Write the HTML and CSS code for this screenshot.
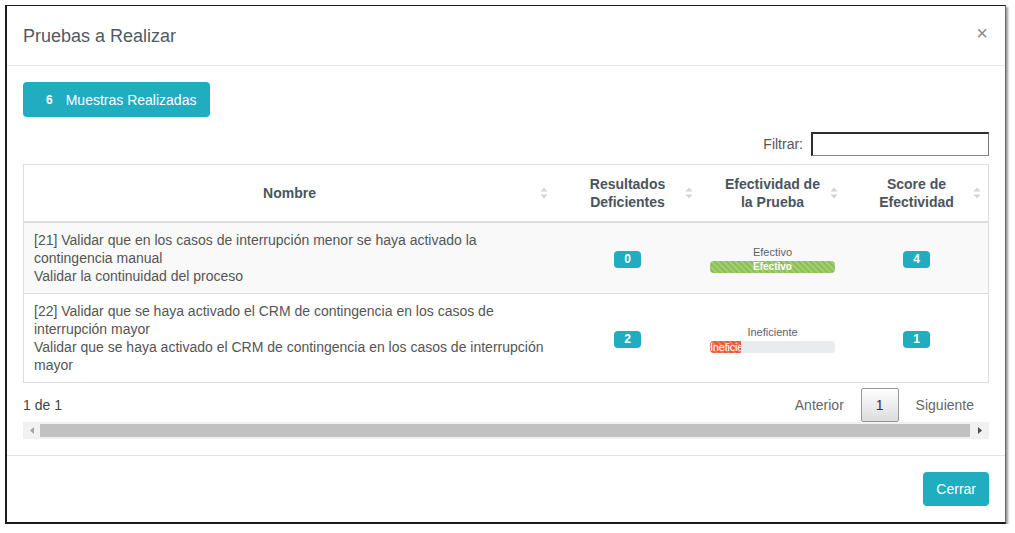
FILE: index.html
```html
<!DOCTYPE html>
<html lang="es">
<head>
<meta charset="utf-8">
<title>Pruebas a Realizar</title>
<link rel="stylesheet" href="styles.css">
</head>
<body>
<div class="modal">
  <div class="modal-header">
    <h4 class="modal-title">Pruebas a Realizar</h4>
    <span class="close">×</span>
  </div>
  <div class="modal-body">
    <div class="btn-row">
      <button class="btn btn-info btn-muestras"><span class="count">6</span>Muestras Realizadas</button>
    </div>
    <div class="filter-row">
      <label class="filter-label">Filtrar:</label>
      <input class="filter-input" type="text">
    </div>
    <table class="dt">
      <colgroup>
        <col class="c1"><col class="c2"><col class="c3"><col class="c4">
      </colgroup>
      <thead>
        <tr>
          <th>Nombre<svg class="sort" width="8" height="14" viewBox="0 0 8 14"><path d="M4 1.5 L7.5 5.5 H0.5 Z" fill="#d4d4d4"/><path d="M4 12.5 L7.5 8.5 H0.5 Z" fill="#d4d4d4"/></svg></th>
          <th>Resultados Deficientes<svg class="sort" width="8" height="14" viewBox="0 0 8 14"><path d="M4 1.5 L7.5 5.5 H0.5 Z" fill="#d4d4d4"/><path d="M4 12.5 L7.5 8.5 H0.5 Z" fill="#d4d4d4"/></svg></th>
          <th>Efectividad de la Prueba<svg class="sort" width="8" height="14" viewBox="0 0 8 14"><path d="M4 1.5 L7.5 5.5 H0.5 Z" fill="#d4d4d4"/><path d="M4 12.5 L7.5 8.5 H0.5 Z" fill="#d4d4d4"/></svg></th>
          <th>Score de Efectividad<svg class="sort" width="8" height="14" viewBox="0 0 8 14"><path d="M4 1.5 L7.5 5.5 H0.5 Z" fill="#d4d4d4"/><path d="M4 12.5 L7.5 8.5 H0.5 Z" fill="#d4d4d4"/></svg></th>
        </tr>
      </thead>
      <tbody>
        <tr class="odd">
          <td class="name">[21] Validar que en los casos de interrupción menor se haya activado la contingencia manual<br>Validar la continuidad del proceso</td>
          <td class="center"><span class="badge">0</span></td>
          <td class="center">
            <div class="prog-wrap">
              <div class="prog-label">Efectivo</div>
              <div class="progress"><div class="bar bar-success" style="width:100%">Efectivo</div></div>
            </div>
          </td>
          <td class="center"><span class="badge">4</span></td>
        </tr>
        <tr>
          <td class="name">[22] Validar que se haya activado el CRM de contingencia en los casos de interrupción mayor<br>Validar que se haya activado el CRM de contingencia en los casos de interrupción mayor</td>
          <td class="center"><span class="badge">2</span></td>
          <td class="center">
            <div class="prog-wrap">
              <div class="prog-label">Ineficiente</div>
              <div class="progress"><div class="bar bar-danger" style="width:25%">Ineficiente</div></div>
            </div>
          </td>
          <td class="center"><span class="badge">1</span></td>
        </tr>
      </tbody>
    </table>
    <div class="info-row">
      <div class="info">1 de 1</div>
      <div class="paginate">
        <span class="pg-btn disabled">Anterior</span>
        <span class="pg-btn current">1</span>
        <span class="pg-btn disabled">Siguiente</span>
      </div>
    </div>
    <div class="hscroll">
      <div class="arrow arrow-left"><svg width="4" height="7" viewBox="0 0 4 7"><path d="M4 0 V7 L0 3.5 Z" fill="#a3a3a3"/></svg></div>
      <div class="thumb"></div>
      <div class="arrow arrow-right"><svg width="4" height="7" viewBox="0 0 4 7"><path d="M0 0 V7 L4 3.5 Z" fill="#505050"/></svg></div>
    </div>
  </div>
  <div class="modal-footer">
    <button class="btn btn-info btn-cerrar">Cerrar</button>
  </div>
</div>
</body>
</html>
```

FILE: styles.css
```css
* { box-sizing: border-box; }
html, body { margin: 0; padding: 0; background: #fff; }
body {
  font-family: "Liberation Sans", Arial, sans-serif;
  font-size: 14px;
  line-height: 18px;
  color: #555;
  padding: 5px 0 0 5px;
}
.modal {
  width: 1001px;
  background: #fff;
  border-top: 1px solid #1c1c1c;
  border-left: 2px solid #1c1c1c;
  border-bottom: 2px solid #1c1c1c;
  border-right: 1px solid #6a6a6a;
  box-shadow: 2px 2px 2px rgba(0,0,0,0.4);
}
.modal-header {
  height: 60px;
  padding: 0 16px;
  border-bottom: 1px solid #e5e5e5;
  display: flex;
  align-items: center;
  justify-content: space-between;
}
.modal-title {
  margin: 0;
  font-size: 18px;
  font-weight: normal;
  line-height: 26px;
  color: #4f5a64;
}
.close {
  font-size: 20px;
  line-height: 20px;
  color: #8a8a8a;
  margin-top: -6px;
  margin-right: 1px;
}
.modal-body { padding: 16px; }
.btn {
  font-family: "Liberation Sans", Arial, sans-serif;
  font-size: 14px;
  line-height: 18px;
  color: #fff;
  border: 0;
  border-radius: 4px;
  cursor: pointer;
}
.btn-info { background: #20adbf; }
.btn-row { display: flex; }
.btn-muestras {
  height: 35px;
  padding: 0 14px 0 23px;
  display: flex;
  align-items: center;
}
.count {
  font-size: 12px;
  font-weight: bold;
  margin-right: 13px;
}
.filter-row {
  margin-top: 15px;
  display: flex;
  justify-content: flex-end;
  align-items: center;
  gap: 8px;
}
.filter-label { color: #555; }
.filter-input {
  width: 178px;
  height: 24px;
  border-style: solid;
  border-width: 2px 1px 1px 2px;
  border-color: #2e2e2e #777 #8a8a8a #2e2e2e;
  margin: 0;
  padding: 0 4px;
  background: #fff;
}
.dt {
  margin-top: 8px;
  width: 966px;
  table-layout: fixed;
  border-collapse: separate;
  border-spacing: 0;
  border: 1px solid #ddd;
}
.c1 { width: 531px; }
.c2 { width: 145px; }
.c3 { width: 145px; }
.c4 { width: 143px; }
.dt th {
  position: relative;
  padding: 10px 18px;
  font-weight: bold;
  color: #4a545e;
  text-align: center;
  vertical-align: middle;
  border-bottom: 2px solid #ddd;
}
.sort {
  position: absolute;
  right: 7px;
  top: 50%;
  margin-top: -7px;
}
.dt td {
  padding: 8px 10px;
  vertical-align: middle;
}
.dt tbody tr + tr td { border-top: 1px solid #ddd; }
.dt tr.odd td { background: #f9f9f9; }
.dt td.name { text-align: left; color: #555; }
.dt td.center { text-align: center; }
.badge {
  display: inline-block;
  background: #20adbf;
  color: #fff;
  font-size: 12px;
  font-weight: bold;
  line-height: 13px;
  padding: 2px 10px;
  border-radius: 4px;
}
.prog-wrap { width: 125px; margin: 2px auto 0; }
.prog-label {
  font-size: 11px;
  line-height: 13px;
  color: #5b6168;
  margin-bottom: 2px;
}
.progress {
  height: 12px;
  background: #e9ecef;
  border-radius: 4px;
  overflow: hidden;
  display: flex;
}
.bar {
  height: 12px;
  overflow: hidden;
  white-space: nowrap;
  text-align: center;
  font-size: 10px;
  font-weight: bold;
  line-height: 12px;
  color: #fff;
  background-image: linear-gradient(45deg, rgba(255,255,255,.18) 25%, transparent 25%, transparent 50%, rgba(255,255,255,.18) 50%, rgba(255,255,255,.18) 75%, transparent 75%, transparent);
  background-size: 6px 6px;
}
.bar-success { background-color: #8cc152; }
.bar-danger { background-color: #e9573f; font-size: 11px; font-weight: normal; letter-spacing: -0.2px; }
.info-row {
  height: 39px;
  padding-top: 5px;
  display: flex;
  justify-content: space-between;
  align-items: center;
}
.info { color: #444; }
.paginate { display: flex; align-items: center; }
.pg-btn {
  display: inline-block;
  padding: 7px 14px;
  margin-left: 2px;
  border: 1px solid transparent;
  border-radius: 2px;
  line-height: 18px;
  color: #666;
}
.pg-btn.current {
  border-color: #979797;
  color: #333;
  background: linear-gradient(to bottom, #fff 0%, #dcdcdc 100%);
}
.hscroll {
  height: 17px;
  background: #f1f1f1;
  display: flex;
  align-items: stretch;
}
.arrow {
  display: flex;
  align-items: center;
  justify-content: center;
}
.arrow-left { width: 17px; }
.arrow-right { width: 19px; }
.thumb {
  flex: 1;
  margin: 2px 0;
  background: #c1c1c1;
}
.modal-footer {
  border-top: 1px solid #e5e5e5;
  padding: 16px;
  display: flex;
  justify-content: flex-end;
}
.btn-cerrar {
  height: 34px;
  padding: 0 13px;
}
```
